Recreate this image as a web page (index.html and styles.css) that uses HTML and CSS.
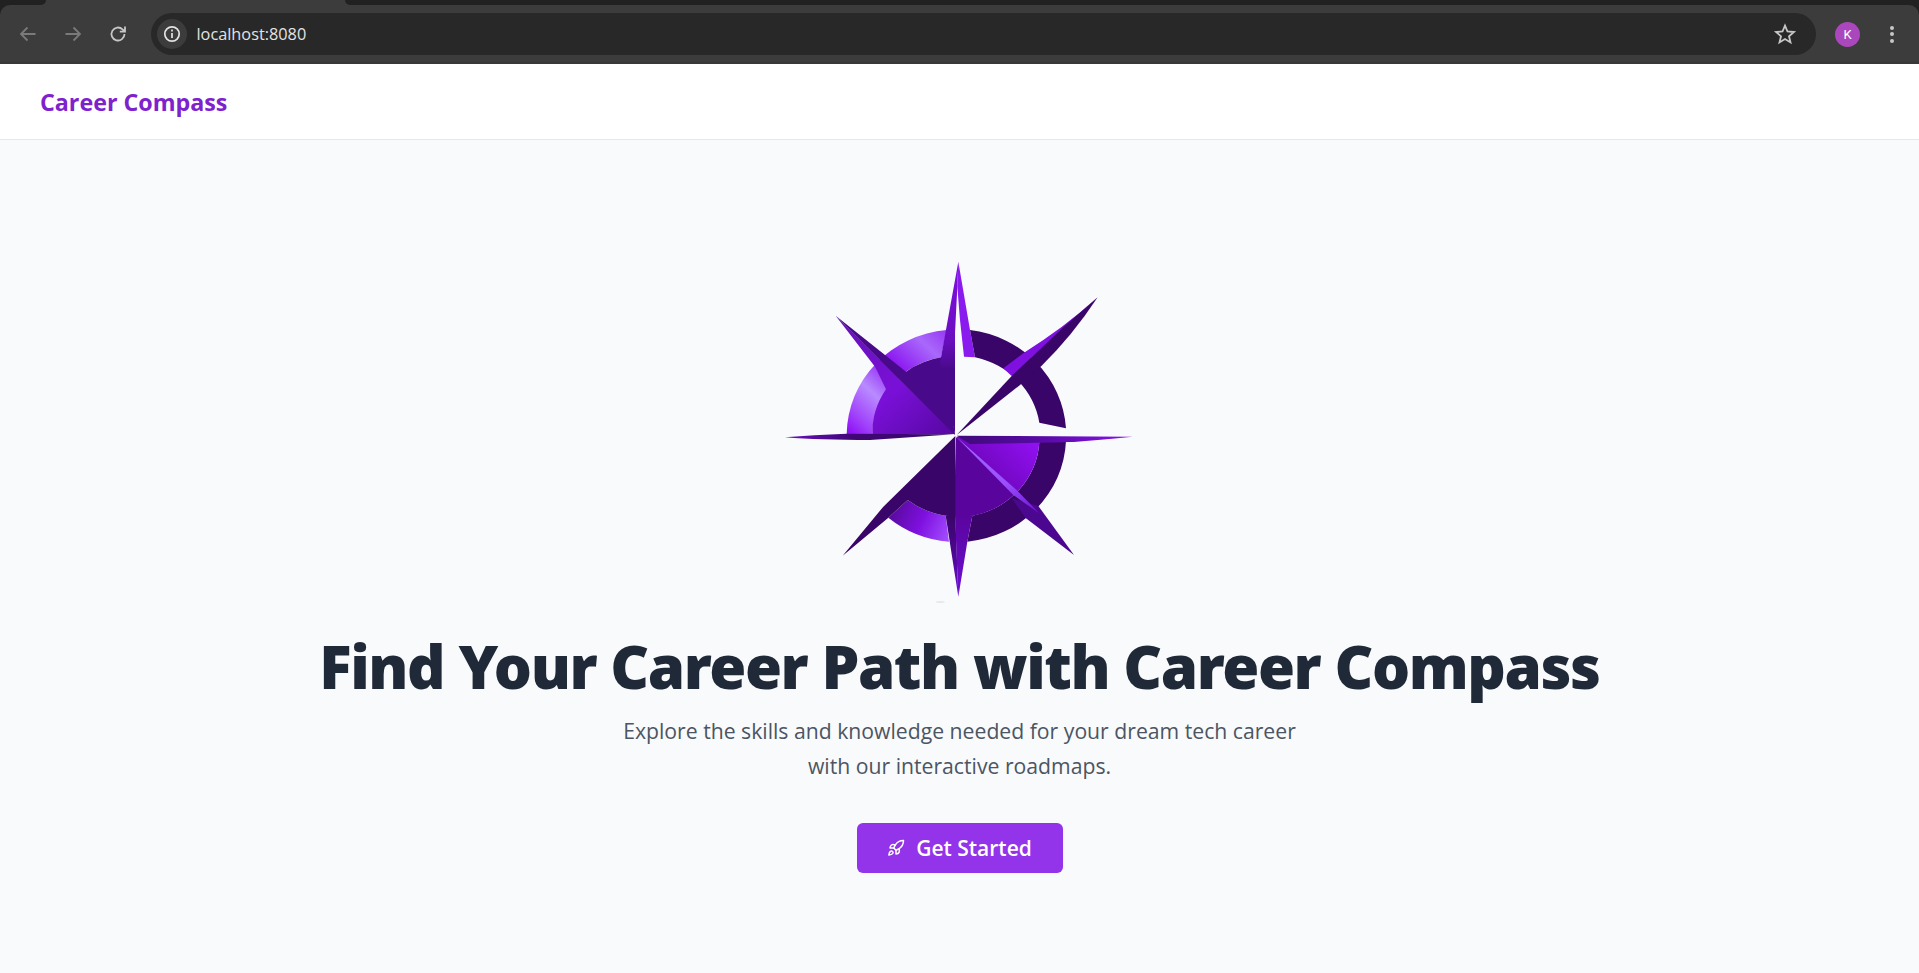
FILE: index.html
```html
<!DOCTYPE html>
<html lang="en">
<head>
<meta charset="utf-8">
<title>Career Compass</title>
<link rel="stylesheet" href="styles.css">
</head>
<body>
<div class="browser">
  <div class="strip"><div class="strip-left"></div><div class="active-tab"></div><div class="strip-right"></div></div>
  <div class="toolbar">
    <svg class="nav-icon dim" viewBox="0 0 24 24"><path d="M19.500 12H5M11.500 5.500L5 12l6.500 6.500"/></svg>
    <svg class="nav-icon dim" viewBox="0 0 24 24"><path d="M4.500 12H19M12.500 5.500L19 12l-6.500 6.500"/></svg>
    <svg class="nav-icon" viewBox="0 0 24 24"><path d="M18.500 12a6.500 6.500 0 1 1-2-4.700L19 9.600M19 4.500v5.200h-5.200"/></svg>
    <div class="omnibox">
      <span class="chip"><svg class="info" viewBox="0 0 20 20"><circle cx="10" cy="10" r="7.200"/><path d="M10 9v5M10 5.600v1.800"/></svg></span>
      <span class="url">localhost:8080</span>
      <svg class="star" viewBox="0 0 24 24"><path d="M12 3.600l2.500 5.900 6.400.5-4.900 4.200 1.500 6.200-5.500-3.300-5.500 3.300 1.500-6.200-4.900-4.200 6.400-.5z"/></svg>
    </div>
    <span class="avatar">K</span>
    <span class="menu"><i></i><i></i><i></i></span>
  </div>
</div>
<header class="site-header"><a class="brand">Career Compass</a></header>
<main class="hero">
  <svg class="logo" viewBox="0 0 1140 1080" aria-label="Career Compass logo">
    <defs>
      <linearGradient id="ringLeft" gradientUnits="userSpaceOnUse" x1="240" y1="550" x2="520" y2="250">
        <stop offset="0" stop-color="#8f10f5"/><stop offset=".12" stop-color="#a040fb"/><stop offset=".33" stop-color="#b98bff"/><stop offset=".58" stop-color="#8a14f0"/><stop offset=".85" stop-color="#a968fb"/><stop offset="1" stop-color="#9a40f5"/>
      </linearGradient>
      <linearGradient id="ringBottom" gradientUnits="userSpaceOnUse" x1="370" y1="780" x2="535" y2="860">
        <stop offset="0" stop-color="#5a0aa0"/><stop offset=".5" stop-color="#7f10e0"/><stop offset="1" stop-color="#a14cff"/>
      </linearGradient>
      <linearGradient id="nwFacet" gradientUnits="userSpaceOnUse" x1="250" y1="260" x2="520" y2="550">
        <stop offset="0" stop-color="#6a10c0"/><stop offset=".5" stop-color="#7a10d8"/><stop offset="1" stop-color="#5a08a8"/>
      </linearGradient>
      <linearGradient id="discRight" gradientUnits="userSpaceOnUse" x1="610" y1="780" x2="800" y2="590">
        <stop offset="0" stop-color="#5c009e"/><stop offset="1" stop-color="#9010f0"/>
      </linearGradient>
      <linearGradient id="eastPoint" gradientUnits="userSpaceOnUse" x1="560" y1="0" x2="1088" y2="0">
        <stop offset="0" stop-color="#3f0a78"/><stop offset=".5" stop-color="#5a0aa8"/><stop offset="1" stop-color="#8a12ee"/>
      </linearGradient>
      <linearGradient id="westPoint" gradientUnits="userSpaceOnUse" x1="45" y1="0" x2="553" y2="0">
        <stop offset="0" stop-color="#6a10c0"/><stop offset=".4" stop-color="#3f0774"/><stop offset="1" stop-color="#3a0670"/>
      </linearGradient>
      <linearGradient id="southLeft" gradientUnits="userSpaceOnUse" x1="0" y1="797" x2="0" y2="1040">
        <stop offset="0" stop-color="#390568"/><stop offset=".45" stop-color="#4c0790"/><stop offset="1" stop-color="#6d10d4"/>
      </linearGradient>
      <linearGradient id="southRight" gradientUnits="userSpaceOnUse" x1="0" y1="797" x2="0" y2="1040">
        <stop offset="0" stop-color="#5a049e"/><stop offset="1" stop-color="#6d10d4"/>
      </linearGradient>
      <linearGradient id="northPoint" gradientUnits="userSpaceOnUse" x1="0" y1="35" x2="0" y2="555">
        <stop offset="0" stop-color="#8010e0"/><stop offset=".45" stop-color="#6a0ec0"/><stop offset=".62" stop-color="#480a8a"/><stop offset="1" stop-color="#480a8a"/>
      </linearGradient>
      <linearGradient id="seSliver" gradientUnits="userSpaceOnUse" x1="560" y1="562" x2="808" y2="790">
        <stop offset="0" stop-color="#a468ff"/><stop offset=".6" stop-color="#9a50ff"/><stop offset="1" stop-color="#6a10d0"/>
      </linearGradient>
    </defs>

    <path d="M230 552A329 318 0 0 1 530 240L513 322A250 238 0 0 0 307 552Z" fill="url(#ringLeft)"/>
    <path d="M555 552L197 197L315 350L348 418A250 238 0 0 0 307 552Z" fill="url(#nwFacet)"/>
    <path d="M197 197L345 315L408 365A250 238 0 0 1 513 322L520 322L555 555Z" fill="#480a8a"/>
    <path d="M565 35L513 322L510 340L555 555L555 250L562 110Z" fill="url(#northPoint)"/>
    <path d="M565 35L600 240L615 322L582 320L570 210L562 110Z" fill="#8a1bee"/>

    <path d="M600 240A329 318 0 0 1 888 535L808 518A250 238 0 0 0 615 322Z" fill="#390568"/>
    <path d="M700 355L762 308Q880 235 983 142L725 378Z" fill="#7f10e0"/>
    <path d="M983 142L880 232L725 378L560 555L750 405L815 347Q905 260 983 142Z" fill="#390568"/>

    <path d="M888 572A329 318 0 0 1 592 875L607 797A250 238 0 0 0 808 575Z" fill="#390568"/>
    <path d="M560 560L808 575A250 238 0 0 1 607 797L552 800Z" fill="url(#discRight)"/>
    <path d="M558 562L730 735A250 238 0 0 1 607 797L552 800Z" fill="#5a049e"/>
    <path d="M805 768L912 915L766 803L725 745Z" fill="#4c0790"/>
    <path d="M560 562L745 725L808 790L730 735Z" fill="url(#seSliver)"/>

    <path d="M355 803A329 318 0 0 0 537 875L527 797A250 238 0 0 1 413 750Z" fill="url(#ringBottom)"/>
    <path d="M556 558L340 770L218 917L355 803L413 750A250 238 0 0 0 527 797L556 800Z" fill="#390568"/>
    <path d="M527 797L556 797L565 1040Z" fill="url(#southLeft)"/>
    <path d="M555 797L607 797L592 875L565 1040Z" fill="url(#southRight)"/>

    <path d="M45 562Q130 555 230 551L553 553L300 570Q150 570 45 562Z" fill="url(#westPoint)"/>
    <path d="M560 557L1088 560Q1000 570 880 577L600 582Z" fill="url(#eastPoint)"/>
    <ellipse cx="511" cy="1056" rx="14" ry="2" fill="#dfe0e6"/>
  </svg>
  <h1 class="title">Find Your Career Path with Career Compass</h1>
  <p class="lead">Explore the skills and knowledge needed for your dream tech career<br>with our interactive roadmaps.</p>
  <a class="cta">
    <svg class="rocket" viewBox="0 0 24 24"><path d="M4.500 16.500c-1.500 1.260-2 5-2 5s3.740-.5 5-2c.71-.84.700-2.130-.09-2.910a2.180 2.180 0 0 0-2.910-.09z"/><path d="M12 15l-3-3a22 22 0 0 1 2-3.950A12.880 12.880 0 0 1 22 2c0 2.720-.78 7.500-6 11a22.350 22.350 0 0 1-4 2z"/><path d="M9 12H4s.55-3.030 2-4c1.620-1.080 5 0 5 0M12 15v5s3.030-.55 4-2c1.080-1.620 0-5 0-5"/></svg>
    <span>Get Started</span>
  </a>
</main>
</body>
</html>
```
FILE: styles.css
```css
* { box-sizing: border-box; }
html, body { margin: 0; height: 100%; overflow: hidden; }
body { background: #f9fafb; font-family: "Open Sans", "Noto Sans", sans-serif; }

.browser { height: 64px; background: #202120; }
.strip { height: 5px; background: #3c3c3c; display: flex; }
.strip-left { width: 46px; background: #202120; border-bottom-right-radius: 6px; }
.active-tab { width: 299px; }
.strip-right { flex: 1; background: #202120; border-bottom-left-radius: 6px; }
.toolbar {
  height: 59px; background: #3c3c3c; border-radius: 10px 10px 0 0; border-bottom: 2px solid #383838;
  display: flex; align-items: center; padding: 1px 0 0 15.500px; gap: 21px;
}
.nav-icon { width: 24px; height: 24px; fill: none; stroke: #c7c7c7; stroke-width: 1.800; flex: none; }
.nav-icon.dim { stroke: #7a7a7a; }
.omnibox {
  flex: 1; height: 42px; background: #282828; border-radius: 21px;
  display: flex; align-items: center; padding: 0 18px 0 6px;
}
.chip { width: 30px; height: 30px; border-radius: 50%; background: #3c3c3c; display: flex; align-items: center; justify-content: center; }
.info { width: 20px; height: 20px; fill: none; stroke: #e3e3e3; stroke-width: 1.700; }
.url { margin-left: 10px; color: #e3e3e3; font: 400 16.300px "Open Sans", sans-serif; flex: 1; }
.star { width: 24px; height: 24px; margin-right: 1px; fill: none; stroke: #c7c7c7; stroke-width: 1.800; }
.avatar {
  margin-left: -1.500px; width: 25px; height: 25px; border-radius: 50%; background: #ab47bc; color: #fff;
  display: flex; align-items: center; justify-content: center; font: 400 13px Roboto, sans-serif; flex: none;
}
.menu { width: 4px; margin: 0 25px 0 9px; display: flex; flex-direction: column; gap: 2.500px; flex: none; }
.menu i { width: 4px; height: 4px; border-radius: 50%; background: #c7c7c7; }

.site-header { height: 76px; background: #fff; border-bottom: 1px solid #e5e7eb; display: flex; align-items: center; padding: 0 40px; }
.brand { color: #7e22ce; font-size: 23.250px; font-weight: 700; margin-top: 1px; }

.hero { display: flex; flex-direction: column; align-items: center; padding-top: 110px; }
.logo { width: 380px; height: 360px; display: block; }
.title { margin: 19px 0 0; color: #1f2937; font-family: "Noto Sans", sans-serif; font-size: 60px; line-height: 75px; font-weight: 900; letter-spacing: -1.430px; white-space: nowrap; }
.lead { margin: 9px 0 0; color: #4b5563; font-size: 21.200px; line-height: 35px; text-align: center; }
.cta {
  margin-top: 40px; width: 206px; height: 50px; background: #9333ea; color: #fff; border-radius: 6px;
  display: flex; align-items: center; justify-content: center; gap: 11px; font-size: 21px; font-weight: 600;
}
.rocket { width: 18px; height: 18px; fill: none; stroke: #fff; stroke-width: 2; stroke-linecap: round; stroke-linejoin: round; }
```
